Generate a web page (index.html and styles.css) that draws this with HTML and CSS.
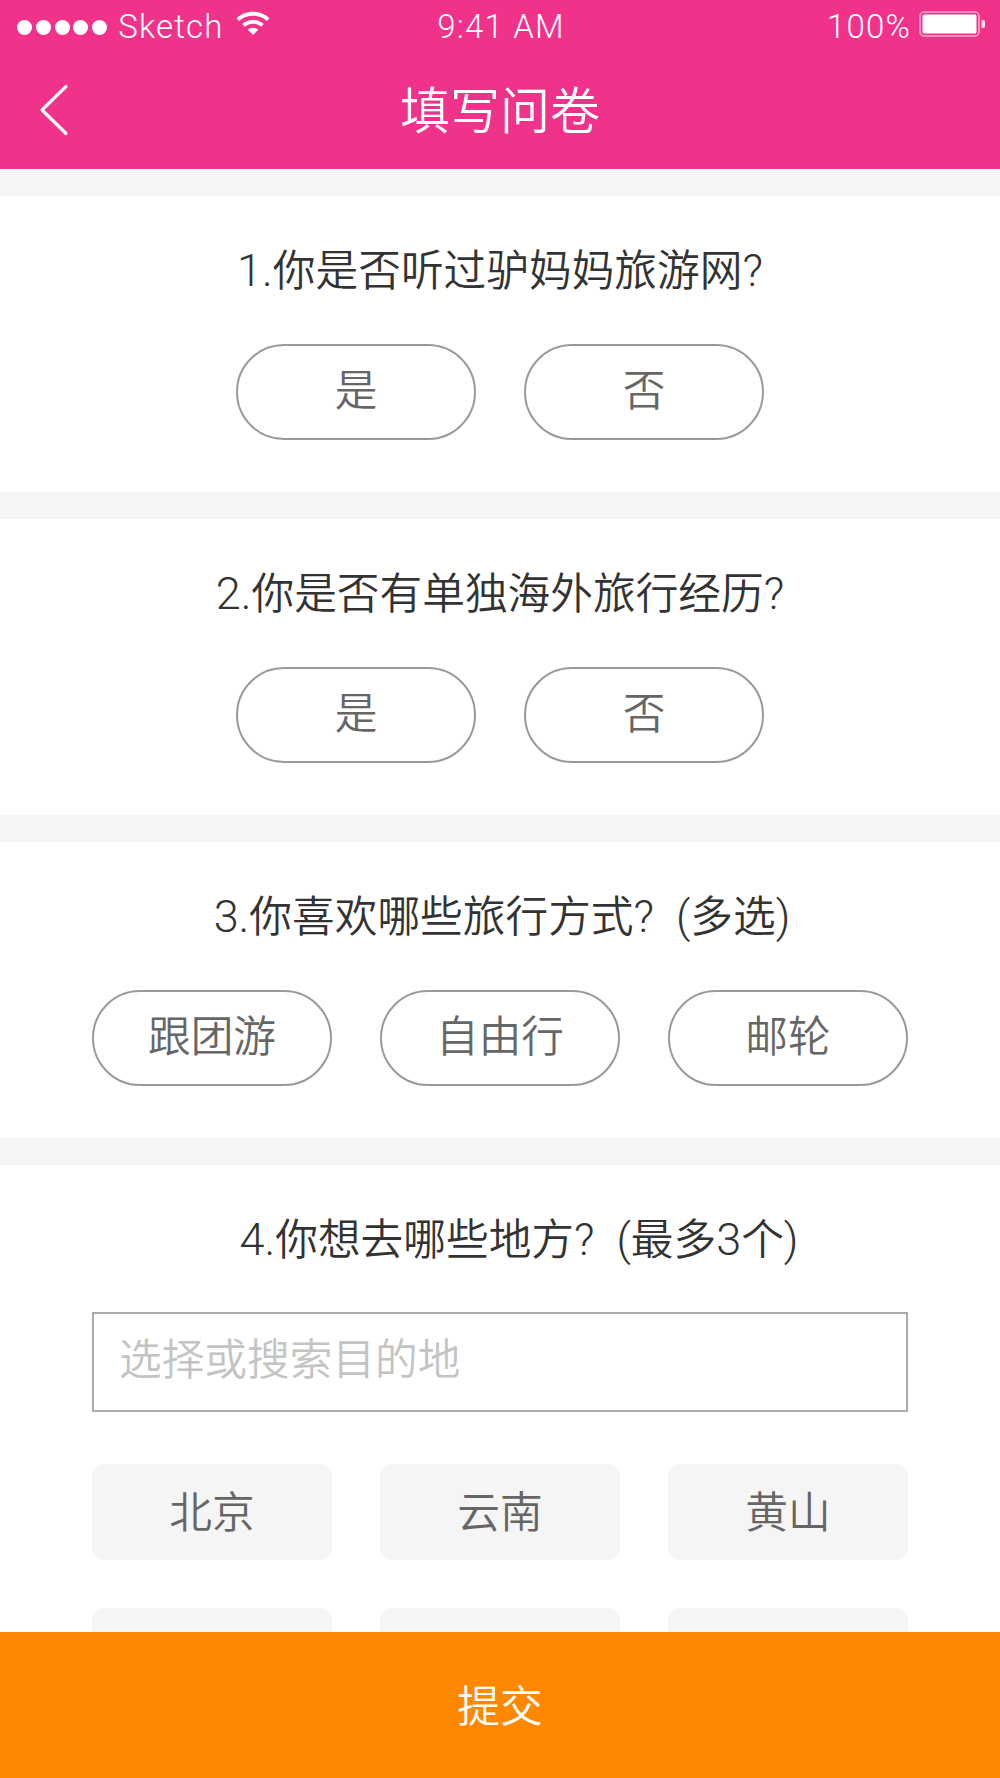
FILE: index.html
```html
<!DOCTYPE html>
<html lang="zh-CN">
<head>
<meta charset="utf-8">
<title>填写问卷</title>
<link rel="stylesheet" href="styles.css">
</head>
<body>
<div class="page">
  <header class="top">
    <div class="status">
      <div class="status-left">
        <span class="dots"><i></i><i></i><i></i><i></i><i></i></span>
        <span>Sketch</span>
        <svg class="wifi" width="36" height="26" viewBox="0 0 36 26"><path d="M1.5 8.200C10.500-.4 25.500-.4 34.500 8.200l-2.600 2.800C24.400 4 11.600 4 4.100 11z" fill="#fff"/><path d="M7.200 14C12.900 8.600 23.100 8.600 28.800 14l-2.700 2.800C21.600 12.700 14.400 12.700 9.900 16.800z" fill="#fff"/><path d="M12.800 19.800c2.900-2.700 7.500-2.700 10.400 0L18 25z" fill="#fff"/></svg>
      </div>
      <div class="time">9:41 AM</div>
      <div class="status-right">
        <span>100%</span>
        <svg class="battery" width="66" height="26" viewBox="0 0 66 26"><rect x="1" y="1" width="59" height="24" rx="4" fill="none" stroke="#fff" stroke-opacity=".6" stroke-width="1.500"/><rect x="3.500" y="3.500" width="54" height="19" rx="1.500" fill="#fff"/><path d="M62.500 9h1.500a2 2 0 0 1 2 2v4a2 2 0 0 1-2 2h-1.500z" fill="#fff" fill-opacity=".85"/></svg>
      </div>
    </div>
    <div class="nav">
      <svg class="back" width="30" height="52" viewBox="0 0 30 52"><path d="M27 2.500 3 26l24 23.500" fill="none" stroke="#fff" stroke-width="3.200" stroke-linecap="round" stroke-linejoin="round"/></svg>
      <h1 class="nav-title">填写问卷</h1>
    </div>
  </header>

  <main class="content">
    <section class="card">
      <h2 class="question"><span class="latin">1.</span>你是否听过驴妈妈旅游网<span class="latin">?</span></h2>
      <div class="options">
        <div class="pill">是</div>
        <div class="pill">否</div>
      </div>
    </section>
    <section class="card">
      <h2 class="question"><span class="latin">2.</span>你是否有单独海外旅行经历<span class="latin">?</span></h2>
      <div class="options">
        <div class="pill">是</div>
        <div class="pill">否</div>
      </div>
    </section>
    <section class="card">
      <h2 class="question question-nudged"><span class="latin">3.</span>你喜欢哪些旅行方式<span class="latin">?  (</span>多选<span class="latin">)</span></h2>
      <div class="options">
        <div class="pill">跟团游</div>
        <div class="pill">自由行</div>
        <div class="pill">邮轮</div>
      </div>
    </section>
    <section class="card card-last">
      <h2 class="question question-shifted"><span class="latin">4.</span>你想去哪些地方<span class="latin">?  (</span>最多<span class="latin">3</span>个<span class="latin">)</span></h2>
      <input class="search" type="text" placeholder="选择或搜索目的地">
      <div class="tags">
        <div class="tag">北京</div>
        <div class="tag">云南</div>
        <div class="tag">黄山</div>
        <div class="tag"></div>
        <div class="tag"></div>
        <div class="tag"></div>
      </div>
    </section>
  </main>

  <footer class="submit">提交</footer>
</div>
</body>
</html>
```
FILE: styles.css
```css
* { box-sizing: border-box; }
html, body { margin: 0; padding: 0; }
body {
  background: #f5f5f5;
  font-family: Roboto, "Noto Sans CJK SC", sans-serif;
  font-weight: 350;
}
.page {
  position: relative;
  width: 1000px;
  height: 1778px;
  overflow: hidden;
}
.top {
  height: 169px;
  background: #f1328a;
  color: #fff;
}
.status {
  height: 58px;
  display: grid;
  grid-template-columns: 1fr auto 1fr;
  align-items: center;
  padding: 0 15px 4px 17px;
  font-weight: 300;
  font-size: 33px;
  letter-spacing: 1.200px;
  line-height: 40px;
}
.status-left { display: flex; align-items: center; gap: 11px; }
.status-right { display: flex; align-items: center; justify-content: flex-end; gap: 8px; }
.dots { display: flex; gap: 3.800px; }
.dots i { width: 15px; height: 15px; border-radius: 50%; background: #fff; }
.wifi { margin-top: -8px; }
.battery { margin-top: -6px; }
.nav {
  position: relative;
  height: 111px;
  display: flex;
  align-items: center;
  justify-content: center;
  padding-bottom: 3px;
}
.back { position: absolute; left: 39px; top: 26px; }
.nav-title {
  margin: 0;
  font-size: 50px;
  font-weight: 350;
  line-height: 60px;
}
.content {
  padding-top: 27px;
  display: flex;
  flex-direction: column;
  gap: 27px;
}
.card {
  background: #fff;
  height: 296px;
  padding: 45px 92px 0;
  display: flex;
  flex-direction: column;
  align-items: center;
}
.card-last { height: 640px; }
.question {
  margin: 0;
  height: 60px;
  font-size: 42.700px;
  font-weight: 350;
  line-height: 60px;
  color: #333;
  white-space: pre;
}
.latin { font-size: 45px; font-weight: 350; }
.question-nudged { padding-left: 4px; }
.question-shifted { padding-left: 38px; }
.options {
  margin-top: 43px;
  display: flex;
  justify-content: center;
  gap: 48px;
}
.pill {
  width: 240px;
  height: 96px;
  padding-bottom: 10px;
  border: 2px solid #999;
  border-radius: 48px;
  display: flex;
  align-items: center;
  justify-content: center;
  font-size: 42.700px;
  color: #666;
}
.search {
  margin-top: 42px;
  width: 816px;
  height: 100px;
  padding: 0 25px 4px;
  border: 2px solid #aaa;
  border-radius: 0;
  outline: none;
  background: #fff;
  font-family: inherit;
  font-weight: 350;
  font-size: 42.700px;
  color: #333;
}
.search::placeholder { color: #c4c4c4; opacity: 1; }
.tags {
  margin-top: 52px;
  width: 816px;
  display: grid;
  grid-template-columns: repeat(3, 240px);
  gap: 48px;
}
.tag {
  height: 96px;
  padding-bottom: 6px;
  border-radius: 12px;
  background: #f5f5f5;
  display: flex;
  align-items: center;
  justify-content: center;
  font-size: 42.700px;
  color: #666;
}
.submit {
  position: absolute;
  left: 0;
  right: 0;
  bottom: 0;
  height: 146px;
  padding-bottom: 4px;
  background: #ff8800;
  color: #fff;
  font-size: 42.700px;
  display: flex;
  align-items: center;
  justify-content: center;
}
```
